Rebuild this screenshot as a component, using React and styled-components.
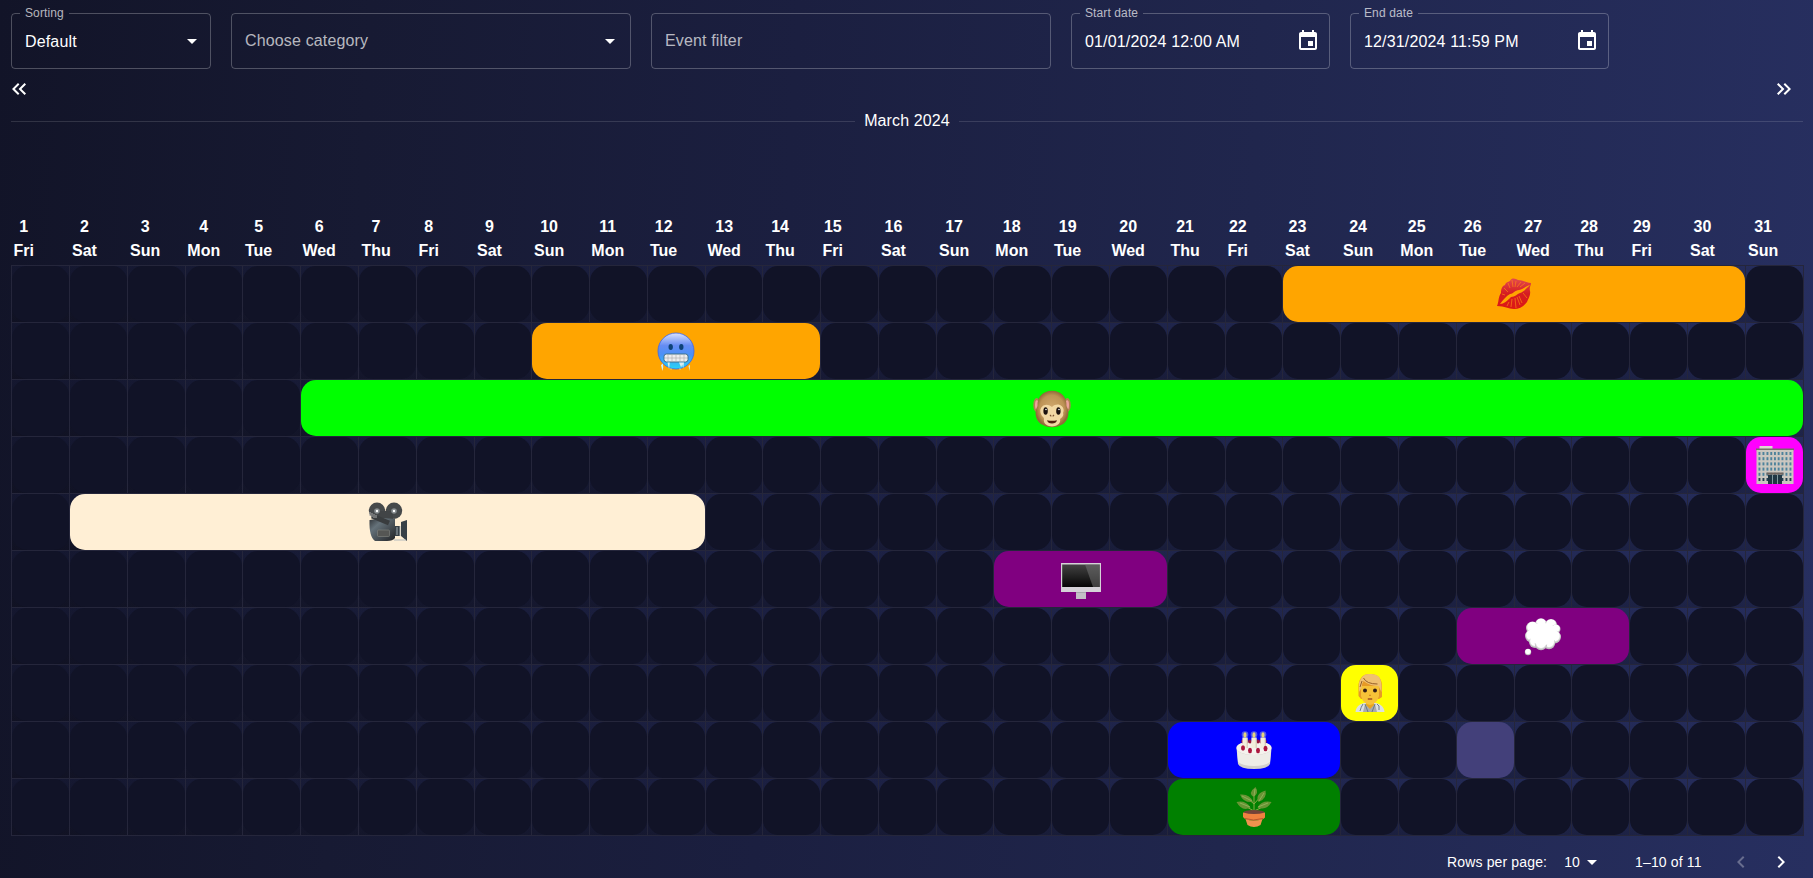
import React from 'react';
import styled, { createGlobalStyle } from 'styled-components';

const GlobalStyle = createGlobalStyle`
  * { box-sizing: border-box; }
  body {
    margin: 0;
    height: 878px;
    overflow: hidden;
    color: #fff;
    font: 16px/24px "Liberation Sans", Arial, sans-serif;
    background: linear-gradient(93deg, #121428 0%, #171a33 20%, #1b1f40 43%, #20264d 68%, #272f60 100%);
  }
`;

const Page = styled.main`
  display: flex;
  flex-direction: column;
  padding: 13px 9px 0 11px;
`;

const Toolbar = styled.div`
  display: flex;
  gap: 20px;
`;

const Field = styled.fieldset`
  display: flex;
  align-items: center;
  justify-content: space-between;
  width: ${(p) => p.$width}px;
  min-width: 0;
  height: ${(p) => (p.$labelled ? 61 : 56)}px;
  margin: ${(p) => (p.$labelled ? '-5px' : '0')} 0 0;
  padding: 0 ${(p) => p.$end}px ${(p) => (p.$labelled ? 5 : 0)}px 13px;
  border: 1px solid rgba(255, 255, 255, 0.25);
  border-radius: 4px;
`;

const Label = styled.legend`
  height: 11px;
  margin-left: -5px;
  padding: 0 5px;
  color: rgba(255, 255, 255, 0.7);
  font-size: 12px;
  line-height: 11px;
  letter-spacing: 0.11px;
`;

const Value = styled.span`
  padding-top: ${(p) => (p.$placeholder ? 0 : 1)}px;
  color: ${(p) => (p.$placeholder ? 'rgba(255,255,255,0.7)' : '#fff')};
  letter-spacing: 0.15px;
  white-space: nowrap;
`;

const Icon = styled.svg`
  display: block;
  flex: none;
  width: 24px;
  height: 24px;
  fill: #fff;
  opacity: ${(p) => (p.$muted ? 0.3 : 1)};
`;

const Paging = styled.nav`
  display: flex;
  justify-content: space-between;
  margin: 8px 8px 0 -4px;
`;

const MonthDivider = styled.div`
  display: flex;
  align-items: center;
  gap: 9.6px;
  height: 24px;
  margin-top: 8px;
  padding-right: 1px;
  letter-spacing: 0.12px;
  &::before, &::after {
    content: "";
    flex: 1;
    height: 1px;
    margin-top: 1px;
    background: rgba(255, 255, 255, 0.13);
  }
`;

/* 31 whole-pixel day columns that add up to 1792px */
const dayColumns =
  '58px 58px 58px 57px repeat(4, 58px) 57px repeat(3, 58px) 57px repeat(3, 58px) 57px repeat(4, 58px) 57px repeat(4, 58px) 57px repeat(4, 58px)';

const DayHeader = styled.div`
  display: grid;
  grid-template-columns: ${dayColumns};
  margin-top: 81.5px;
  height: 50.5px;
  font-weight: 700;
`;

const Day = styled.div`
  width: max-content;
  padding-left: ${(p) => p.$inset}px;
  text-align: center;
  white-space: pre-line;
`;

const Board = styled.div`
  width: 1793px;
  border: solid #25263b;
  border-width: 0 1px 1px 0;
`;

const Row = styled.div`
  display: grid;
  grid-template-columns: ${dayColumns};
  height: 57px;
  background: linear-gradient(to bottom, rgba(32, 38, 82, 0.16), rgba(12, 12, 22, 0.32));
`;

const Cell = styled.div`
  grid-row: 1;
  grid-column: ${(p) => p.$from} / span ${(p) => p.$days || 1};
  border: solid #25263b;
  border-width: 1px 0 0 1px;
`;

const Fill = styled.div`
  display: flex;
  align-items: center;
  justify-content: center;
  height: 100%;
  border-radius: 15px;
  background: ${(p) => p.$color || '#111327'};
`;

const Emoji = styled.svg`
  display: block;
  width: 40px;
  height: 40px;
`;

const Footer = styled.footer`
  display: flex;
  align-items: center;
  height: 42px;
  margin-top: 5px;
  padding-left: 1436px;
  font-size: 14px;
  line-height: 20px;
  letter-spacing: 0.15px;
`;

const RowsValue = styled.span`
  margin-left: 17px;
`;

const Range = styled.span`
  margin: 0 27px 0 31px;
`;

const NextIcon = styled.span`
  margin-left: 16px;
`;

const Drop = () => (
  <Icon viewBox="0 0 24 24"><path d="M7 10l5 5 5-5z" /></Icon>
);
const Calendar = () => (
  <Icon viewBox="0 0 24 24">
    <path d="M17 12h-5v5h5v-5zM16 1v2H8V1H6v2H5c-1.11 0-1.99.9-1.99 2L3 19c0 1.1.89 2 2 2h14c1.1 0 2-.9 2-2V5c0-1.1-.9-2-2-2h-1V1h-2zm3 18H5V8h14v11z" />
  </Icon>
);

const Kiss = () => (
  <Emoji viewBox="0 0 40 40">
    <defs><linearGradient id="lip" x1="0" y1="0" x2="0" y2="1"><stop offset="0" stopColor="#e34a4d" /><stop offset=".5" stopColor="#d51d20" /><stop offset="1" stopColor="#dd1714" /></linearGradient></defs>
    <path fill="url(#lip)" d="M3 32 C5 28 4 23 7 19 C7 15 8 12 11 11 C12 8 14 8 16 7 C18 3 22 5 24 6 C28 6 31 8 37 9 C37 12 35 13 36 17 C37 21 34 25 33 28 C29 33 25 35 20 35 C14 35 11 32 3 32z" />
    <path fill="#ffa500" d="M6 30 C10 25 12 22 16 20 C19 20 21 16 25 16 C29 15 32 12 36 11 C32 15 29 18 26 19 C23 20 21 23 17 23 C13 27 10 30 6 30z" />
    <path fill="none" stroke="#ff8a12" strokeWidth=".65" d="M14 9l2 5M18 6l1 7M22 7l-1 6M27 8l-4 5M31 9l-5 4M10 14l4 4M8 20l3 1M18 25l-1 8M21 24l1 10M25 22l3 7M29 19l4 5M15 28l-2 4M23 23l3 8" />
  </Emoji>
);

const ColdFace = () => (
  <Emoji viewBox="0 0 40 40">
    <defs><linearGradient id="cold" x1="0" y1="0" x2="0" y2="1"><stop offset="0" stopColor="#d9e2ff" /><stop offset=".35" stopColor="#658cf3" /><stop offset=".6" stopColor="#4a91f7" /><stop offset="1" stopColor="#28d5f5" /></linearGradient></defs>
    <circle cx="20" cy="20" r="18" fill="url(#cold)" stroke="#3a65eb" strokeWidth=".8" />
    <ellipse cx="14.7" cy="16" rx="2.2" ry="2.9" fill="#0d4277" /><ellipse cx="25.3" cy="16" rx="2.2" ry="2.9" fill="#0d4277" />
    <rect x="8" y="23" width="24" height="8" rx="2.4" fill="#eee" stroke="#41708a" strokeWidth="1" />
    <path stroke="#aaa" strokeWidth=".6" d="M9 27h22M12 23.5v7M16 23.5v7M20 23.5v7M24 23.5v7M28 23.5v7" />
    <path fill="#d9edef" d="M5 34l2-1.5.2 4-.8 3.5zM11.5 31.5h2.3l-.7 7zM23 31.5h5l-.8 6-1-4-1 3zM32.5 35l1.5-1-.4 6z" />
    <path stroke="#efe2c3" strokeWidth=".6" d="M15 37v2M24 37v2" />
  </Emoji>
);

const Monkey = () => (
  <Emoji viewBox="0 0 40 40">
    <defs><radialGradient id="fur"><stop offset="0" stopColor="#d1aa70" /><stop offset=".75" stopColor="#bd9355" /><stop offset="1" stopColor="#8f6938" /></radialGradient></defs>
    <ellipse cx="4.7" cy="17" rx="3.4" ry="7" fill="#ad8451" /><ellipse cx="35.3" cy="17" rx="3.4" ry="7" fill="#ad8451" />
    <ellipse cx="4.8" cy="17" rx="1.8" ry="4.8" fill="#efa29d" /><ellipse cx="35.2" cy="17" rx="1.8" ry="4.8" fill="#efa29d" />
    <path fill="url(#fur)" d="M20 2.7C29 2.7 35 9 34.5 18C39 26 35 35 29 37C24 40 16 40 11 37C5 35 1 26 5.5 18C5 9 11 2.7 20 2.7z" />
    <path fill="#f2d8a3" d="M20 19C13 13 6 20 9 26C10 29 12 29 12 31C10 41 30 41 28 31C30 29 32 28 31 25C34 19 26 13 20 19z" />
    <ellipse cx="13.6" cy="23" rx="2.2" ry="3.8" fill="#1b110e" /><ellipse cx="26.4" cy="23" rx="2.2" ry="3.8" fill="#1b110e" />
    <circle cx="14" cy="21.5" r=".8" fill="#fff" /><circle cx="27" cy="21.5" r=".8" fill="#fff" />
    <path d="M18 27l1.3 1.3M22 27l-1.3 1.3" stroke="#7a5030" strokeWidth="1.1" />
    <path fill="#522010" d="M15 32.2q5 1 10 0q-1 3.2-5 3.2t-5-3.2z" />
  </Emoji>
);

const Office = () => (
  <Emoji viewBox="0 0 40 40">
    <path fill="#ddd6d0" d="M4.5 1h13v3h-13z" /><path fill="#756d69" d="M1 3.5h38v2H1z" /><path fill="#cbc7c0" d="M1.5 5h37v34h-37z" />
    {[7, 12.2, 17.4, 22.6, 27.8, 33].map((y) => [3.5, 7.5, 11.5, 15.3, 19, 22.7, 26.5, 30.5, 34.5].map((x) => (
      <rect key={`${x}-${y}`} x={x} y={y} width="1.9" height="3" fill={y > 30 ? '#243f51' : '#4d829b'} />
    )))}
    <path fill="#70655f" d="M11.5 27.5h17v2.2h-17z" /><path fill="#213744" d="M13 30h14v9H13z" /><path stroke="#80999e" d="M17.5 30v9M22.5 30v9" />
  </Emoji>
);

const Camera = () => (
  <Emoji viewBox="0 0 40 40">
    <defs><linearGradient id="cam" x1="0" y1="0" x2="1" y2="1"><stop stopColor="#303337" /><stop offset=".3" stopColor="#65727a" /><stop offset="1" stopColor="#222326" /></linearGradient></defs>
    <circle cx="9" cy="8.8" r="8.2" fill="#46494b" /><circle cx="26" cy="8.8" r="8.2" fill="#46494b" /><path fill="#414446" d="M10 9h15v10H10z" />
    <path fill="url(#cam)" d="M2 18q11-3 25-1v19q-2 3-8 3H7Q1 35 1.5 18z" />
    <path fill="#374047" d="M27 24h5v10h-5zM33 20l6-2v21l-6-5z" /><path stroke="#aab4b9" strokeWidth=".9" d="M26 38h12M29 25v8M32 24v10" />
    <rect x="9.5" y="28" width="12" height="6.5" rx="1" fill="#555654" stroke="#858681" strokeWidth=".6" />
    <path stroke="#393c3e" strokeWidth="5" d="M4 14l17 7" /><path stroke="#aaa" strokeWidth="1" d="M2 10v4M4 11v4M6 12v4M8 13v3" />
    <circle cx="9" cy="9" r="2.8" fill="#858b8e" /><circle cx="26" cy="9" r="2.8" fill="#858b8e" /><circle cx="9" cy="9" r="1.2" fill="#fff" /><circle cx="26" cy="9" r="1.2" fill="#fff" />
  </Emoji>
);

const Monitor = () => (
  <Emoji viewBox="0 0 40 40">
    <defs><linearGradient id="screen" x1="0" y1="0" x2="0" y2="1"><stop stopColor="#424242" /><stop offset="1" stopColor="#050505" /></linearGradient></defs>
    <path fill="#d5d2d8" d="M0 4h40v29H0z" /><path fill="url(#screen)" d="M1.2 5.5h37.6V28H1.2z" /><path fill="#777" opacity=".5" d="M24 5.5h14.8V28H32z" />
    <path fill="#c3bfc6" d="M15 33h10v7H15z" /><path stroke="#9b98a2" strokeWidth=".7" d="M15 33.5h10" />
  </Emoji>
);

const Thought = () => (
  <Emoji viewBox="0 0 40 40">
    <defs><radialGradient id="cloud" cx=".5" cy=".42"><stop offset=".72" stopColor="#fff" /><stop offset="1" stopColor="#bdbdbd" /></radialGradient></defs>
    <g fill="url(#cloud)"><circle cx="18" cy="8" r="5.8" /><circle cx="28" cy="9" r="6" /><circle cx="9.5" cy="12" r="6.5" /><circle cx="33" cy="13" r="4.5" /><circle cx="8.5" cy="20" r="6.5" /><circle cx="31.5" cy="21" r="6.5" /><circle cx="12" cy="26" r="6" /><circle cx="26" cy="27" r="6.2" /><circle cx="18" cy="28" r="6.2" /><circle cx="5" cy="36" r="3.2" /></g>
    <ellipse cx="20" cy="18" rx="14" ry="11" fill="#fff" />
  </Emoji>
);

const Doctor = () => (
  <Emoji viewBox="0 0 40 40">
    <path fill="#dce0e1" d="M5.5 39Q6 32 14 30h12q8 2 8.5 9z" />
    <path fill="#e9a51e" d="M16 25h8v9l-4 4-4-4z" /><path fill="#a9abad" d="M15 31l5 5 5-5 2 8H13z" />
    <path fill="#e69a27" d="M8.5 23V11Q11 0 20 1Q31 1 32 12v12l-3 2H11z" />
    <path fill="#f7c238" d="M11 13h18v10q-2 8-9 9q-7-1-9-9z" />
    <path fill="#f0c171" d="M9 19V10Q12 0 20 1Q31 0 31.5 12v7l-3-6q-9 0-15-5q-2 3-2 7z" /><path fill="none" stroke="#8a5421" strokeWidth=".9" d="M13.5 5q3 6 14 6M10 14l2-6" />
    <circle cx="15" cy="17.5" r="2" fill="#331d17" /><circle cx="25" cy="17.5" r="2" fill="#331d17" /><path stroke="#92401b" strokeWidth="1.3" d="M17.8 26h4.4" /><path stroke="#c3761a" d="M19.2 22.3h1.6" />
    <path fill="none" stroke="#61747e" strokeWidth=".9" d="M13 31q-2 3-3 7M27 31q3 1 2 6M18 39l-3-8M22 39l3-8" />
  </Emoji>
);

const Cake = () => (
  <Emoji viewBox="0 0 40 40">
    <path fill="#d3d0cb" d="M2.5 18q0-6 17.5-6t17.5 6L36 34q-2 5-16 5T4 34z" /><ellipse cx="20" cy="18" rx="17.5" ry="7" fill="#f5f2ee" />
    <path fill="#eeece7" d="M3 20q4 5 17 5t17-5l-1 12q-5 4-16 4T4 32z" />
    {[9, 13, 16, 24, 27, 31].map((x) => <ellipse key={x} cx={x} cy="11.5" rx="1.7" ry="2" fill="#98153b" />)}
    {[11, 20, 29].map((x) => (
      <g key={x}><circle cx={x} cy="4.5" r="3.3" fill="#8792dc" opacity=".6" /><path fill="#f3efdc" d={`M${x - 2.6} 7.5h5.2V18h-5.2z`} /><ellipse cx={x} cy="5" rx="1.6" ry="2.8" fill="#e6d57b" /><path stroke="#c7c0a8" strokeWidth=".8" d={`M${x + 2.2} 8v10`} /></g>
    ))}
    {[[9, 18], [16, 20.5], [24, 20.5], [31.5, 18.5]].map(([x, y]) => <ellipse key={x} cx={x} cy={y} rx="2" ry="2.7" fill="#ac163f" />)}
  </Emoji>
);

const Plant = () => (
  <Emoji viewBox="0 0 40 40">
    <path fill="none" stroke="#85aa45" strokeWidth="1" d="M20 25V8M20 24L9 18M20 24l11-5M20 17l-8-7M20 17l8-9" />
    <g fill="#689434"><path d="M21.5 0q4 6-2 10q-6-4 2-10zM6 7.5q10-1 13 7.5q-10 1-13-7.5zM31.5 3.5q2 8-7 11.5q-4-8 7-11.5zM2.5 15q9-2 14 5.5Q8 25 2.5 15zM37.5 15q-5 9-14 5.5Q28 13 37.5 15z" /></g>
    <path stroke="#9fbc68" strokeWidth=".7" fill="none" d="M20 9l1-7M18 14L8 9M25 14l5-8M16 20L6 16M24 20l10-4" />
    <ellipse cx="20" cy="25.5" rx="10.5" ry="2.5" fill="#734238" /><path fill="#ef8140" d="M9 25.5q11 3 22 0v5q-2 3-11 3T9 30z" /><path fill="#f1924e" d="M11.5 32q8 3 17 0L26.5 38q-3 2-6.5 2t-6.5-2z" />
    <path fill="none" stroke="#b9572e" d="M11 31.5q8 3 18 0" />
  </Emoji>
);

const rows = [
  [{ from: 23, days: 8, color: '#ffa500', Art: Kiss }],
  [{ from: 10, days: 5, color: '#ffa500', Art: ColdFace }],
  [{ from: 6, days: 26, color: '#00ff00', Art: Monkey }],
  [{ from: 31, days: 1, color: '#ff00ff', Art: Office }],
  [{ from: 2, days: 11, color: '#ffefd5', Art: Camera }],
  [{ from: 18, days: 3, color: '#800080', Art: Monitor }],
  [{ from: 26, days: 3, color: '#800080', Art: Thought }],
  [{ from: 24, days: 1, color: '#ffff00', Art: Doctor }],
  [{ from: 21, days: 3, color: '#0000ff', Art: Cake }, { from: 26, days: 1, color: '#43407a' }],
  [{ from: 21, days: 3, color: '#008000', Art: Plant }],
];

const weekdays = [['Fri', 2.6], ['Sat', 3], ['Sun', 3], ['Mon', 2.3], ['Tue', 3], ['Wed', 2.4], ['Thu', 3.4]];
const days = Array.from({ length: 31 }, (_, i) => i + 1);

export default function App() {
  return (
    <Page>
      <GlobalStyle />
      <Toolbar>
        <Field $width={200} $end={6} $labelled><Label>Sorting</Label><Value>Default</Value><Drop /></Field>
        <Field $width={400} $end={8}><Value $placeholder>Choose category</Value><Drop /></Field>
        <Field $width={400} $end={13}><Value $placeholder>Event filter</Value></Field>
        <Field $width={259} $end={9} $labelled><Label>Start date</Label><Value>01/01/2024 12:00 AM</Value><Calendar /></Field>
        <Field $width={259} $end={9} $labelled><Label>End date</Label><Value>12/31/2024 11:59 PM</Value><Calendar /></Field>
      </Toolbar>
      <Paging>
        <Icon viewBox="0 0 24 24"><path d="M17.59 18 19 16.59 14.42 12 19 7.41 17.59 6l-6 6zM11 18l1.41-1.41L7.83 12l4.58-4.59L11 6l-6 6z" /></Icon>
        <Icon viewBox="0 0 24 24"><path d="M6.41 6 5 7.41 9.58 12 5 16.59 6.41 18l6-6zM13 6l-1.41 1.41L16.17 12l-4.58 4.59L13 18l6-6z" /></Icon>
      </Paging>
      <MonthDivider>March 2024</MonthDivider>
      <DayHeader>
        {days.map((d) => {
          const [name, inset] = weekdays[(d - 1) % 7];
          return <Day key={d} $inset={inset}>{`${d}\n${name}`}</Day>;
        })}
      </DayHeader>
      <Board>
        {rows.map((events, r) => (
          <Row key={r}>
            {days
              .filter((d) => !events.some((e) => d >= e.from && d < e.from + e.days))
              .map((d) => <Cell key={d} $from={d}><Fill /></Cell>)}
            {events.map(({ from, days: span, color, Art }) => (
              <Cell key={`event-${from}`} $from={from} $days={span}><Fill $color={color}>{Art && <Art />}</Fill></Cell>
            ))}
          </Row>
        ))}
      </Board>
      <Footer>
        <span>Rows per page:</span>
        <RowsValue>10</RowsValue>
        <Drop />
        <Range>1–10 of 11</Range>
        <Icon $muted viewBox="0 0 24 24"><path d="M15.41 16.59l-4.58-4.59 4.58-4.59L14 6l-6 6 6 6z" /></Icon>
        <NextIcon><Icon viewBox="0 0 24 24"><path d="M8.59 16.59l4.58-4.59-4.58-4.59L10 6l6 6-6 6z" /></Icon></NextIcon>
      </Footer>
    </Page>
  );
}
